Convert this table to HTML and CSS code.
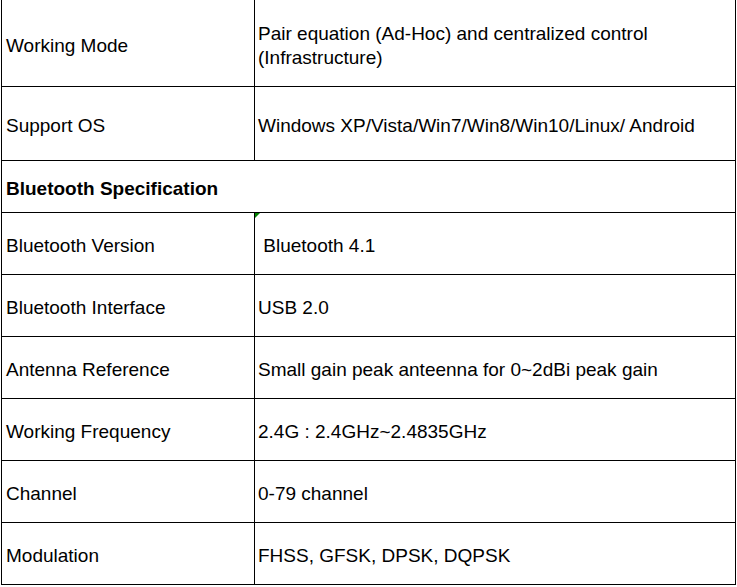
FILE: index.html
```html
<!DOCTYPE html>
<html>
<head>
<meta charset="utf-8">
<link rel="stylesheet" href="styles.css">
</head>
<body>
<div class="sheet">
  <div class="row r-first">
    <div class="cell label">Working Mode</div>
    <div class="cell value">Pair equation (Ad-Hoc) and centralized control (Infrastructure)</div>
  </div>
  <div class="row r-os">
    <div class="cell label">Support OS</div>
    <div class="cell value">Windows XP/Vista/Win7/Win8/Win10/Linux/ Android</div>
  </div>
  <div class="row r-head">
    <div class="cell head">Bluetooth Specification</div>
  </div>
  <div class="row">
    <div class="cell label">Bluetooth Version</div>
    <div class="cell value marked"><span class="flag"></span>&nbsp;Bluetooth 4.1</div>
  </div>
  <div class="row">
    <div class="cell label">Bluetooth Interface</div>
    <div class="cell value">USB 2.0</div>
  </div>
  <div class="row">
    <div class="cell label">Antenna Reference</div>
    <div class="cell value">Small gain peak anteenna for 0~2dBi peak gain</div>
  </div>
  <div class="row">
    <div class="cell label">Working Frequency</div>
    <div class="cell value">2.4G : 2.4GHz~2.4835GHz</div>
  </div>
  <div class="row">
    <div class="cell label">Channel</div>
    <div class="cell value">0-79 channel</div>
  </div>
  <div class="row">
    <div class="cell label">Modulation</div>
    <div class="cell value">FHSS, GFSK, DPSK, DQPSK</div>
  </div>
</div>
</body>
</html>
```
FILE: styles.css
```css
html, body {
  margin: 0;
  padding: 0;
  background: #ffffff;
}
body {
  font-family: "Liberation Sans", Arial, sans-serif;
  font-size: 19px;
  line-height: 24px;
  color: #000000;
}
.sheet {
  margin-left: 1px;
  width: 735px;
  box-sizing: border-box;
  border-left: 1px solid #000;
  border-right: 1px solid #000;
}
.row {
  display: flex;
  box-sizing: border-box;
  height: 62px;
  border-bottom: 1px solid #000;
}
.r-first { height: 87px; }
.r-os { height: 74px; }
.r-head { height: 52px; }
.cell {
  display: flex;
  align-items: center;
  box-sizing: border-box;
  padding-top: 5px;
}
.label {
  width: 253px;
  flex: none;
  border-right: 1px solid #000;
  padding-left: 4px;
}
.value {
  flex: 1;
  padding-left: 3px;
  padding-right: 4px;
}
.head {
  flex: 1;
  padding-left: 4px;
  font-weight: bold;
}
.marked {
  position: relative;
}
.flag {
  position: absolute;
  left: 0;
  top: 0;
  width: 0;
  height: 0;
  border-top: 5px solid #008000;
  border-right: 5px solid transparent;
}
```
